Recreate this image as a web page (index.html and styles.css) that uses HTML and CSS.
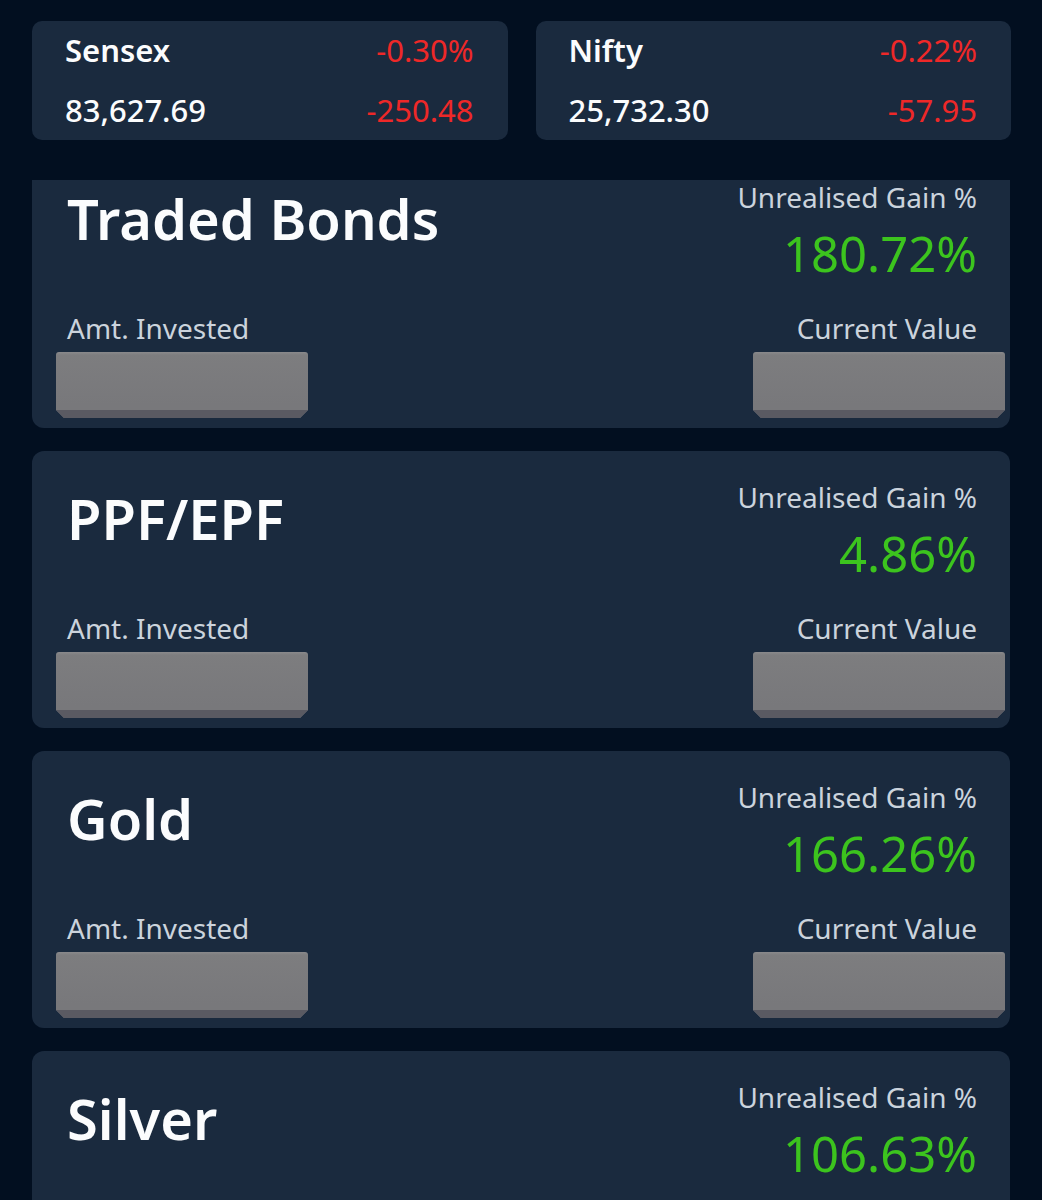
FILE: index.html
```html
<!DOCTYPE html>
<html lang="en">
<head>
    <meta charset="UTF-8">
    <meta name="viewport" content="width=device-width, initial-scale=1.0">
    <title>Portfolio</title>
    <link rel="stylesheet" href="styles.css">
</head>
<body>

    <!-- Index ticker -->
    <div class="ticker">
        <div class="index-card">
            <div class="index-row">
                <span class="index-name">Sensex</span>
                <span class="index-change">-0.30%</span>
            </div>
            <div class="index-row">
                <span class="index-value">83,627.69</span>
                <span class="index-change">-250.48</span>
            </div>
        </div>
        <div class="index-card">
            <div class="index-row">
                <span class="index-name">Nifty</span>
                <span class="index-change">-0.22%</span>
            </div>
            <div class="index-row">
                <span class="index-value">25,732.30</span>
                <span class="index-change">-57.95</span>
            </div>
        </div>
    </div>

    <!-- Holdings list (scrolled) -->
    <div class="holdings">
        <div class="holdings-list">
            <div class="asset-card">
                <div class="asset-top">
                    <h2 class="asset-name">Traded Bonds</h2>
                    <div class="gain">
                        <div class="label">Unrealised Gain %</div>
                        <div class="gain-value">180.72%</div>
                    </div>
                </div>
                <div class="asset-bottom">
                    <div class="amount">
                        <div class="label">Amt. Invested</div>
                        <div class="redact redact-left"></div>
                    </div>
                    <div class="amount amount-right">
                        <div class="label">Current Value</div>
                        <div class="redact redact-right"></div>
                    </div>
                </div>
            </div>

            <div class="asset-card">
                <div class="asset-top">
                    <h2 class="asset-name">PPF/EPF</h2>
                    <div class="gain">
                        <div class="label">Unrealised Gain %</div>
                        <div class="gain-value">4.86%</div>
                    </div>
                </div>
                <div class="asset-bottom">
                    <div class="amount">
                        <div class="label">Amt. Invested</div>
                        <div class="redact redact-left"></div>
                    </div>
                    <div class="amount amount-right">
                        <div class="label">Current Value</div>
                        <div class="redact redact-right"></div>
                    </div>
                </div>
            </div>

            <div class="asset-card">
                <div class="asset-top">
                    <h2 class="asset-name">Gold</h2>
                    <div class="gain">
                        <div class="label">Unrealised Gain %</div>
                        <div class="gain-value">166.26%</div>
                    </div>
                </div>
                <div class="asset-bottom">
                    <div class="amount">
                        <div class="label">Amt. Invested</div>
                        <div class="redact redact-left"></div>
                    </div>
                    <div class="amount amount-right">
                        <div class="label">Current Value</div>
                        <div class="redact redact-right"></div>
                    </div>
                </div>
            </div>

            <div class="asset-card">
                <div class="asset-top">
                    <h2 class="asset-name">Silver</h2>
                    <div class="gain">
                        <div class="label">Unrealised Gain %</div>
                        <div class="gain-value">106.63%</div>
                    </div>
                </div>
                <div class="asset-bottom">
                    <div class="amount">
                        <div class="label">Amt. Invested</div>
                        <div class="redact redact-left"></div>
                    </div>
                    <div class="amount amount-right">
                        <div class="label">Current Value</div>
                        <div class="redact redact-right"></div>
                    </div>
                </div>
            </div>
        </div>
    </div>

</body>
</html>
```

FILE: styles.css
```css
html, body {
    height: 1200px;
    overflow: hidden;
}

body {
    font-family: 'Noto Sans', 'Open Sans', sans-serif;
    background-color: #020f20;
    margin: 0;
    color: #fbfcfd;
}

/* ticker */
.ticker {
    height: 180px;
    box-sizing: border-box;
    padding: 21px 31px 0 32px;
    display: flex;
    gap: 28px;
}

.index-card {
    flex: 1;
    height: 119px;
    box-sizing: border-box;
    background: #1a2a3e;
    border-radius: 10px;
    padding: 9px 34px 0 33px;
    display: flex;
    flex-direction: column;
    gap: 20px;
}

.index-row {
    display: flex;
    justify-content: space-between;
    font-size: 31px;
    line-height: 40px;
}

.index-name, .index-value {
    font-weight: 600;
    color: #fbfcfd;
}

.index-value {
    font-weight: 500;
}

.index-change {
    color: #ee2828;
}

/* holdings */
.holdings {
    height: 1020px;
    overflow: hidden;
}

.holdings-list {
    margin: -29px 32px 0 32px;
    display: flex;
    flex-direction: column;
    gap: 23px;
}

.asset-card {
    background: #1a2a3e;
    border-radius: 12px;
    height: 277px;
    box-sizing: border-box;
    padding: 28px 33px 0 35px;
}

.asset-top {
    display: flex;
    justify-content: space-between;
    align-items: flex-start;
}

.asset-name {
    margin: 7px 0 0 0;
    font-size: 56px;
    line-height: 64px;
    font-weight: 600;
    color: #fbfcfd;
}

.gain {
    text-align: right;
}

.label {
    font-size: 28px;
    line-height: 36px;
    color: #cbd3dc;
}

.gain-value {
    margin-top: 13px;
    font-size: 49px;
    line-height: 50px;
    color: #3cc41e;
}

.asset-bottom {
    margin-top: 32px;
    display: flex;
    justify-content: space-between;
}

.amount-right {
    display: flex;
    flex-direction: column;
    align-items: flex-end;
}

/* redaction stickers */
.redact {
    width: 252px;
    height: 66px;
    margin-top: 6px;
    border-radius: 3px 3px 0 0;
    background: linear-gradient(180deg, #8a8a8c 0, #7d7d7f 3px, #78787b 80%);
    box-shadow: inset 0 -8px 0 #5a5a62;
    clip-path: polygon(0 0, 100% 0, 100% calc(100% - 8px), calc(100% - 8px) 100%, 8px 100%, 0 calc(100% - 8px));
}

.redact-left {
    margin-left: -11px;
}

.redact-right {
    margin-right: -28px;
}
```
